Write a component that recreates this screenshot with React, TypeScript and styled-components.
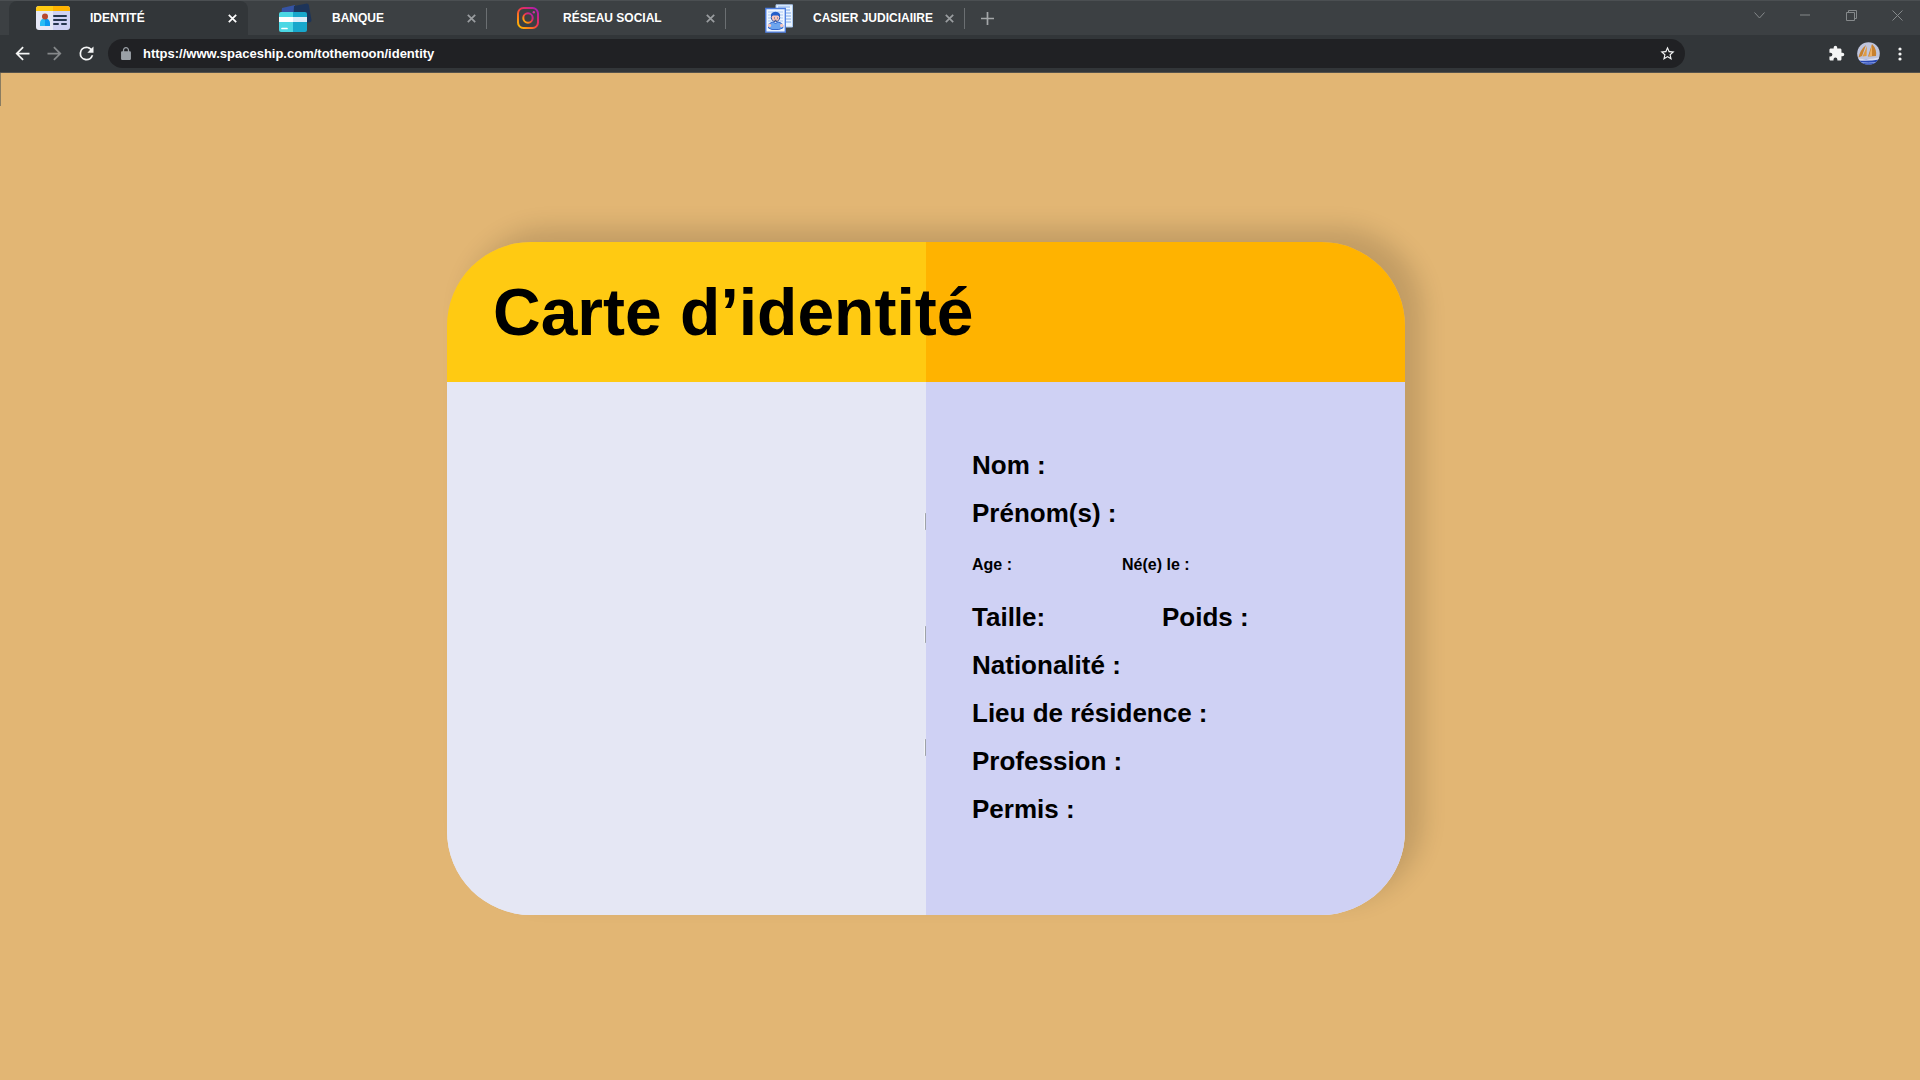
import React from "react";
import styled, { createGlobalStyle } from "styled-components";

const GlobalStyle = createGlobalStyle`
  *, *::before, *::after { box-sizing: border-box; }
  body { margin: 0; background: #e2b674; font-family: "Liberation Sans", Arial, sans-serif; font-weight: 700; }
  button { font: inherit; color: inherit; background: none; border: 0; padding: 0; cursor: pointer; }
  svg { display: block; flex: none; }
`;

const Window = styled.div`
  min-height: 100vh;
  display: flex;
  flex-direction: column;
`;

const Chrome = styled.header`
  background: #323639;
  border-bottom: 1px solid #55524b;
`;

const TabStrip = styled.div`
  display: flex;
  align-items: stretch;
  height: 35px;
  padding-left: 9px;
  background: #3c4043;
  border-top: 1px solid #4b4f52;
`;

const TabItem = styled.div<{ $active?: boolean; $separated?: boolean }>`
  position: relative;
  display: flex;
  align-items: center;
  width: 239px;
  padding: 0 8px 0 24px;
  border-radius: 8px 8px 0 0;
  background: ${(p) => (p.$active ? "#323639" : "transparent")};
  color: ${(p) => (p.$active ? "#ffffff" : "#9a9da0")};
  &::after {
    content: "";
    position: absolute;
    right: 0;
    top: 7px;
    height: 21px;
    width: 1px;
    background: ${(p) => (p.$separated ? "#6b6f72" : "transparent")};
  }
`;

const TabButton = styled.button<{ $gap: number; $indent: number }>`
  display: flex;
  flex: 1;
  align-items: center;
  gap: ${(p) => p.$gap}px;
  padding-left: ${(p) => p.$indent}px;
  color: #ffffff;
  font-size: 12px;
  line-height: 16px;
  white-space: nowrap;
`;

const IconButton = styled.button<{ $w: number; $h?: number; $muted?: boolean }>`
  display: grid;
  place-items: center;
  width: ${(p) => p.$w}px;
  height: ${(p) => p.$h ?? p.$w}px;
  color: ${(p) => (p.$muted ? "#85888a" : "inherit")};
`;

const NewTab = styled(IconButton)`
  align-self: center;
  margin-left: 8px;
  color: #a4a7a9;
`;

const WindowControls = styled.div`
  display: flex;
  align-items: center;
  margin-left: auto;
  color: #85898b;
  height: 28px;
`;

const Toolbar = styled.div`
  display: flex;
  align-items: center;
  height: 37px;
  padding: 0 4px 0 6px;
  color: #f4f5f5;
`;

const Address = styled.form`
  display: flex;
  align-items: center;
  flex: 1;
  height: 29px;
  margin: 0 135px 0 6px;
  padding: 0 8px 0 13px;
  border-radius: 15px;
  background: #202124;
`;

const UrlInput = styled.input`
  flex: 1;
  min-width: 0;
  margin-left: 12px;
  padding: 0;
  border: 0;
  outline: 0;
  background: transparent;
  color: #ffffff;
  font: 700 13px/16px "Liberation Sans", Arial, sans-serif;
`;

const Page = styled.main`
  flex: 1;
  display: grid;
  grid-template-columns: 447fr 958fr 515fr;
  align-items: start;
  padding: 169px 0 120px;
  background: #e2b674;
  position: relative;
  &::before {
    content: "";
    position: absolute;
    left: 0;
    top: 0;
    width: 1px;
    height: 33px;
    background: #8a7c60;
  }
`;

const Card = styled.article`
  grid-column: 2;
  overflow: hidden;
  border-radius: 84px;
  box-shadow: 18px -14px 24px rgba(0, 0, 0, 0.14);
`;

const CardHeader = styled.div`
  display: flex;
  align-items: center;
  height: 140px;
  padding-left: 46px;
  background: linear-gradient(to right, #ffca12 50%, #ffb300 50%);
`;

const Title = styled.h1`
  margin: 0;
  color: #000;
  font-size: 66px;
  line-height: 72px;
  white-space: nowrap;
`;

const CardBody = styled.div`
  display: grid;
  grid-template-columns: 1fr 1fr;
  background: #e5e7f4;
`;

const Photo = styled.div`
  display: flex;
  flex-direction: column;
  align-items: flex-end;
  gap: 96px;
  padding-top: 131px;
  background: #e5e7f4;
`;

const Notch = styled.span`
  width: 2px;
  height: 17px;
  border-radius: 2px 0 0 2px;
  background: linear-gradient(to right, #f4f5fa 50%, #9fa3a8 50%);
`;

const Fields = styled.dl`
  margin: 0;
  padding: 59px 20px 82px 46px;
  background: #cfd1f4;
`;

const Line = styled.div<{ $columns?: string; $tall?: boolean }>`
  display: grid;
  grid-template-columns: ${(p) => p.$columns ?? "1fr"};
  align-items: center;
  height: ${(p) => (p.$tall ? 56 : 48)}px;
`;

const Label = styled.dt<{ $small?: boolean }>`
  color: #000;
  font-size: ${(p) => (p.$small ? 16 : 26)}px;
  line-height: 32px;
  white-space: nowrap;
`;

const IdIcon = () => (
  <svg width="34" height="24" viewBox="0 0 34 24" aria-hidden="true">
    <path d="M3 0h14v24H3q-3 0-3-3V3q0-3 3-3z" fill="#e6e8f6" />
    <path d="M17 0h14q3 0 3 3v18q0 3-3 3H17z" fill="#cfd1f4" />
    <path d="M0 5V3q0-3 3-3h14v5z" fill="#ffca12" />
    <path d="M17 0h14q3 0 3 3v2H17z" fill="#ffb300" />
    <path d="M4 20v-3q0-4 5-5v8z" fill="#27bdf5" />
    <path d="M9 12q5 1 5 5v3H9z" fill="#0a98f0" />
    <circle cx="9" cy="10.5" r="3" fill="#b9492f" />
    <path d="M18 10h12M18 14h12M18 18h4M26 18h4" stroke="#27364f" strokeWidth="2" strokeLinecap="round" />
  </svg>
);

const BankIcon = () => (
  <svg width="34" height="30" viewBox="0 0 34 30" aria-hidden="true">
    <path d="M4 5 17 2v12H3z" fill="#3553a4" />
    <path d="m16 3 13-2.500q1.500 0 1.800 1.500L33.500 17q0 2-1.500 2.200l-17 2z" fill="#1d3459" />
    <path d="M3 9h12v20H3q-2 0-2-2V11q0-2 2-2z" fill="#4bd7e4" />
    <path d="M15 9h12q2 0 2 2v16q0 2-2 2H15z" fill="#18a7cc" />
    <path d="M1 14h14v5H1z" fill="#fff" />
    <path d="M15 14h14v5H15z" fill="#dcecf9" />
    <path d="M4 25.500h5" stroke="#fff" strokeWidth="1.700" strokeLinecap="round" />
  </svg>
);

const InstaIcon = () => (
  <svg width="22" height="22" viewBox="0 0 22 22" aria-hidden="true">
    <defs>
      <linearGradient id="insta" x1="0" y1="1" x2="1" y2="0">
        <stop offset="0" stopColor="#ffc400" />
        <stop offset=".3" stopColor="#ff7a1c" />
        <stop offset=".55" stopColor="#f0324f" />
        <stop offset="1" stopColor="#a21ac0" />
      </linearGradient>
    </defs>
    <g fill="none" stroke="url(#insta)" strokeWidth="2">
      <rect x="1" y="1" width="20" height="20" rx="5.500" />
      <circle cx="11" cy="11" r="4.700" />
    </g>
    <circle cx="16.800" cy="5.300" r="1.200" fill="#cf2fa0" />
  </svg>
);

const RecordIcon = () => (
  <svg width="28" height="29" viewBox="0 0 28 29" aria-hidden="true">
    <path d="M11 .8h16.500V23H11z" fill="#eaf4ff" stroke="#a8c7ee" />
    <path d="M13 3h12M13 6h12M21 9h5M21 12h5M21 15h5M21 18h5" stroke="#7fa8e8" />
    <path d="M.8 4.500h19.500v23.700H.8z" fill="#eef6ff" stroke="#4a7be0" strokeWidth="1.300" />
    <path d="M3 8h15M3 11h15M3 14h15M3 17h15M3 20h15" stroke="#a9c7f4" />
    <circle cx="10.500" cy="13.500" r="4.200" fill="#f7c6bd" stroke="#3157a5" />
    <path d="M6 13q-1-5 4.500-5.200Q16 8 15 13l-2-1.500H8z" fill="#235fca" />
    <path d="M9 14h.8M12 14h.8M9.500 16.300h2" stroke="#20447e" />
    <path d="M3.500 24v-2.500q1-3 4.500-3.500l2.500 1.500L13 18q4 .5 4.800 3.500V24l-4 1.500H7z" fill="#6da5ee" stroke="#3569cf" />
    <circle cx="4.500" cy="21.500" r="1.700" fill="#f7c6bd" />
    <circle cx="16.700" cy="21.500" r="1.700" fill="#f7c6bd" />
  </svg>
);

const CloseIcon = () => (
  <svg width="9" height="9" viewBox="0 0 9 9" stroke="currentColor" strokeWidth="1.700">
    <path d="m.8.8 7.400 7.400M8.200.8.8 8.200" />
  </svg>
);

const material = {
  back: "M20 11H7.830l5.590-5.590L12 4l-8 8 8 8 1.410-1.410L7.830 13H20v-2z",
  forward: "M12 4l-1.410 1.410L16.170 11H4v2h12.170l-5.580 5.590L12 20l8-8z",
  reload:
    "M17.650 6.350A7.960 7.960 0 0 0 12 4a8 8 0 1 0 7.730 10h-2.080A6 6 0 1 1 12 6c1.660 0 3.140.690 4.220 1.780L13 11h7V4z",
  lock: "M18 8h-1V6c0-2.760-2.240-5-5-5S7 3.240 7 6v2H6c-1.100 0-2 .9-2 2v10c0 1.100.9 2 2 2h12c1.100 0 2-.9 2-2V10c0-1.100-.9-2-2-2zM9 6c0-1.660 1.340-3 3-3s3 1.340 3 3v2H9z",
  star: "M22 9.240l-7.190-.62L12 2 9.190 8.630 2 9.240l5.460 4.730L5.820 21 12 17.270 18.180 21l-1.630-7.030zM12 15.400l-3.760 2.270 1-4.280-3.320-2.880 4.380-.38L12 6.100l1.710 4.040 4.380.38-3.320 2.880 1 4.280z",
  puzzle:
    "M20.500 11H19V7c0-1.100-.9-2-2-2h-4V3.500a2.500 2.500 0 0 0-5 0V5H4c-1.100 0-1.990.9-1.990 2v3.800H3.500a2.700 2.700 0 0 1 0 5.400H2V20c0 1.100.9 2 2 2h3.800v-1.500a2.700 2.700 0 0 1 5.400 0V22H17c1.100 0 2-.9 2-2v-4h1.500a2.500 2.500 0 0 0 0-5z",
};

const Glyph = ({ d, size }: { d: string; size: number }) => (
  <svg width={size} height={size} viewBox="0 0 24 24" fill="currentColor" aria-hidden="true">
    <path d={d} />
  </svg>
);

const Avatar = () => (
  <svg width="23" height="23" viewBox="0 0 23 23" aria-hidden="true">
    <defs>
      <clipPath id="round"><circle cx="11.500" cy="11.500" r="11.300" /></clipPath>
    </defs>
    <g clipPath="url(#round)">
      <path d="M0 0h23v23H0z" fill="#bfc5dd" />
      <path d="M9 3 5 14 1.500 15.500Q3 8 9 3z" fill="#c9822f" />
      <path d="m10 4-.5 10-4 .5z" fill="#e09b43" />
      <path d="M15 2q5 5 4 12l-8 .5z" fill="#c7812f" />
      <path d="M15 3v11l-3 .5z" fill="#edb064" />
      <path d="M0 17h23v6H0z" fill="#2948b3" />
      <path d="M1 16.500q10 2 21-1v2q-10 2-21 1z" fill="#d9def3" />
      <path d="M3 20.500q8 1 17 0" stroke="#8ea4e6" fill="none" />
    </g>
  </svg>
);

const tabs = [
  { name: "IDENTITÉ", icon: <IdIcon />, gap: 20, indent: 3 },
  { name: "BANQUE", icon: <BankIcon />, gap: 20, indent: 6 },
  { name: "RÉSEAU SOCIAL", icon: <InstaIcon />, gap: 24, indent: 6 },
  { name: "CASIER JUDICIAIIRE", icon: <RecordIcon />, gap: 20, indent: 15 },
];

export default function App() {
  return (
    <Window>
      <GlobalStyle />
      <Chrome>
        <TabStrip>
          {tabs.map((tab, i) => (
            <TabItem key={tab.name} $active={i === 0} $separated={i > 0}>
              <TabButton $gap={tab.gap} $indent={tab.indent}>
                {tab.icon}
                {tab.name}
              </TabButton>
              <IconButton $w={16} aria-label={`Fermer ${tab.name}`}><CloseIcon /></IconButton>
            </TabItem>
          ))}
          <NewTab $w={28} aria-label="Nouvel onglet">
            <svg width="13" height="13" viewBox="0 0 13 13" stroke="currentColor" strokeWidth="1.700"><path d="M6.500 0v13M0 6.500h13" /></svg>
          </NewTab>
          <WindowControls>
            <IconButton $w={46} $h={28} aria-label="Rechercher des onglets">
              <svg width="11" height="7" viewBox="0 0 11 7" fill="none" stroke="currentColor"><path d="m.5.5 5 5.500 5-5.500" /></svg>
            </IconButton>
            <IconButton $w={46} $h={28} aria-label="Réduire">
              <svg width="10" height="2" viewBox="0 0 10 2" fill="currentColor"><path d="M0 .5h10v1H0z" /></svg>
            </IconButton>
            <IconButton $w={46} $h={28} aria-label="Restaurer">
              <svg width="11" height="11" viewBox="0 0 11 11" fill="none" stroke="currentColor"><path d="M.5 2.500h8v8h-8zM2.500 2.500v-2h8v8h-2" /></svg>
            </IconButton>
            <IconButton $w={46} $h={28} aria-label="Fermer">
              <svg width="11" height="11" viewBox="0 0 11 11" fill="none" stroke="currentColor"><path d="m.5.5 10 10M10.500.5l-10 10" /></svg>
            </IconButton>
          </WindowControls>
        </TabStrip>
        <Toolbar>
          <IconButton $w={32} aria-label="Retour"><Glyph d={material.back} size={21} /></IconButton>
          <IconButton $w={32} $muted aria-label="Avancer"><Glyph d={material.forward} size={21} /></IconButton>
          <IconButton $w={32} aria-label="Actualiser"><Glyph d={material.reload} size={21} /></IconButton>
          <Address onSubmit={(e) => e.preventDefault()}>
            <svg width="10" height="13" viewBox="4 1 16 21" fill="#9aa0a6" aria-hidden="true"><path d={material.lock} /></svg>
            <UrlInput aria-label="Adresse" defaultValue="https://www.spaceship.com/tothemoon/identity" />
            <IconButton $w={20} type="button" aria-label="Favori"><Glyph d={material.star} size={17} /></IconButton>
          </Address>
          <IconButton $w={32} aria-label="Extensions"><Glyph d={material.puzzle} size={17} /></IconButton>
          <IconButton $w={32} aria-label="Profil"><Avatar /></IconButton>
          <IconButton $w={32} aria-label="Menu">
            <svg width="4" height="14" viewBox="0 0 4 14" fill="currentColor"><circle cx="2" cy="2" r="1.600" /><circle cx="2" cy="7" r="1.600" /><circle cx="2" cy="12" r="1.600" /></svg>
          </IconButton>
        </Toolbar>
      </Chrome>
      <Page>
        <Card>
          <CardHeader><Title>Carte d’identité</Title></CardHeader>
          <CardBody>
            <Photo>
              <Notch />
              <Notch />
              <Notch />
            </Photo>
            <Fields>
              <Line><Label>Nom :</Label></Line>
              <Line><Label>Prénom(s) :</Label></Line>
              <Line $tall $columns="150px 1fr"><Label $small>Age :</Label><Label $small>Né(e) le :</Label></Line>
              <Line $columns="190px 1fr"><Label>Taille:</Label><Label>Poids :</Label></Line>
              <Line><Label>Nationalité :</Label></Line>
              <Line><Label>Lieu de résidence :</Label></Line>
              <Line><Label>Profession :</Label></Line>
              <Line><Label>Permis :</Label></Line>
            </Fields>
          </CardBody>
        </Card>
      </Page>
    </Window>
  );
}
